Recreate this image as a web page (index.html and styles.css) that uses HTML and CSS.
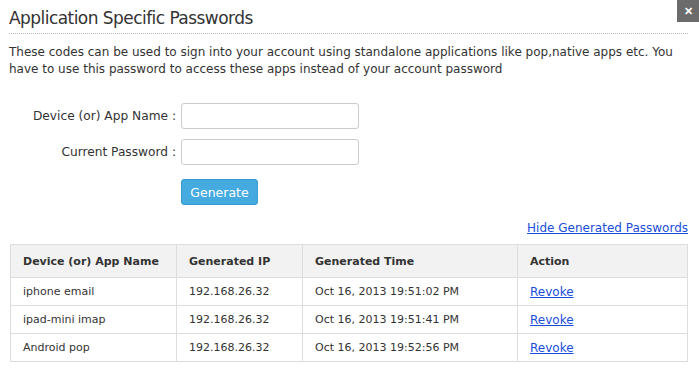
FILE: index.html
```html
<!DOCTYPE html>
<html lang="en">
<head>
  <meta charset="UTF-8">
  <title>Application Specific Passwords</title>
  <link rel="stylesheet" href="styles.css">
</head>
<body>
  <div class="dialog">
    <button class="close" title="Close">&#x2715;</button>
    <h1>Application Specific Passwords</h1>
    <p class="intro">These codes can be used to sign into your account using standalone applications like pop,native apps etc. You have to use this password to access these apps instead of your account password</p>
    <form class="form-gen">
      <label for="appname">Device (or) App Name :</label>
      <input id="appname" type="text" />
      <label for="curpass">Current Password :</label>
      <input id="curpass" type="password" />
      <span></span>
      <button type="submit" class="btn">Generate</button>
    </form>
    <div class="links"><a href="#">Hide Generated Passwords</a></div>
    <table class="pass-table">
      <thead>
        <tr><th class="c1">Device (or) App Name</th><th class="c2">Generated IP</th><th class="c3">Generated Time</th><th class="c4">Action</th></tr>
      </thead>
      <tbody>
        <tr><td>iphone email</td><td>192.168.26.32</td><td>Oct 16, 2013 19:51:02 PM</td><td><a href="#">Revoke</a></td></tr>
        <tr><td>ipad-mini imap</td><td>192.168.26.32</td><td>Oct 16, 2013 19:51:41 PM</td><td><a href="#">Revoke</a></td></tr>
        <tr><td>Android pop</td><td>192.168.26.32</td><td>Oct 16, 2013 19:52:56 PM</td><td><a href="#">Revoke</a></td></tr>
      </tbody>
    </table>
  </div>
</body>
</html>
```
FILE: styles.css
```css
body { margin: 0; background: #fff; color: #333; font-family: 'DejaVu Sans', Verdana, sans-serif; }
.dialog { position: relative; padding: 0 11px 0 10px; }
.close { position: absolute; top: 0; right: 0; width: 22px; height: 22px; border: none; padding: 0; background: #6b6b6b; color: #fff; font-size: 11px; font-weight: bold; line-height: 22px; cursor: pointer; }
h1 { margin: 0 0 0 -1px; padding: 8px 0 5px 0; font-size: 17px; font-weight: normal; border-bottom: 1px dotted #bbb; letter-spacing: -0.55px; }
.intro { margin: 10px 0 0 -1px; font-size: 12px; line-height: 17px; }
.form-gen { display: grid; grid-template-columns: 166px 178px; column-gap: 5px; row-gap: 10px; align-items: center; margin-top: 25px; font-size: 12.2px; }
.form-gen label { text-align: right; }
.form-gen input { box-sizing: border-box; height: 26px; border: 1px solid #ccc; border-radius: 3px; padding: 4px 6px; font-size: 13px; }
.btn { margin-top: 4px; width: 77px; height: 26px; border: 1px solid #3a9bd0; border-radius: 3px; background: #45aae0; color: #fff; font-family: inherit; font-size: 12.5px; padding: 0; cursor: pointer; }
.links { text-align: right; margin-top: 16px; font-size: 12px; }
a { color: #1a4ed8; }
.pass-table { width: 678px; table-layout: fixed; margin-top: 9px; border-collapse: collapse; font-size: 11px; }
.pass-table th, .pass-table td { border: 1px solid #ddd; text-align: left; padding: 0 12px; white-space: nowrap; }
.pass-table th { background: #f2f2f2; height: 32px; font-weight: bold; }
.pass-table td { height: 27px; }
.pass-table td a { font-size: 12px; }
.c1 { width: 141px; }
.c2 { width: 101px; }
.c3 { width: 190px; }
```
